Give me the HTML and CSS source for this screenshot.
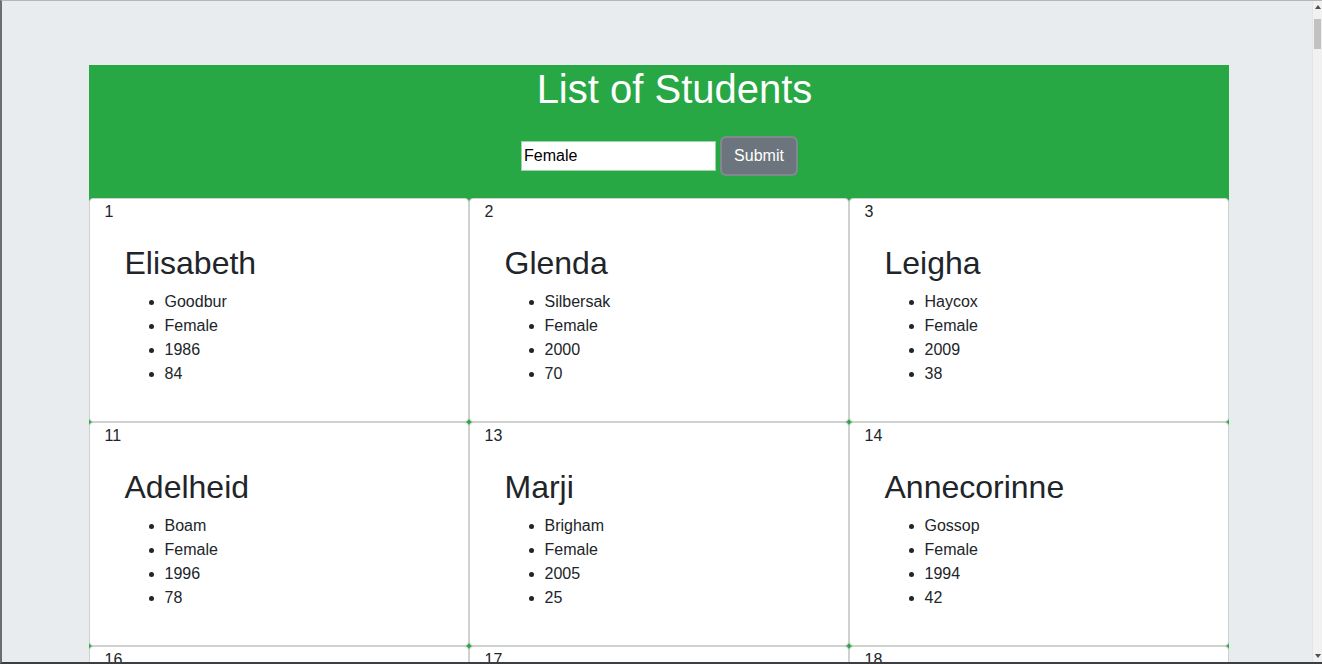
FILE: index.html
```html
<!DOCTYPE html>
<html lang="en">
<head>
<meta charset="utf-8">
<title>List of Students</title>
<link rel="stylesheet" href="styles.css">
</head>
<body>
<div class="window">
  <div class="viewport">
    <div class="container">
      <header class="header">
        <h1 class="title">List of Students</h1>
        <form class="filter">
          <input class="filter-input" type="text" value="Female">
          <button class="btn" type="button">Submit</button>
        </form>
      </header>
      <div class="grid">
        <div class="card"><div class="num">1</div><div class="body"><h2 class="name">Elisabeth</h2><ul class="facts"><li>Goodbur</li><li>Female</li><li>1986</li><li>84</li></ul></div></div>
        <div class="card"><div class="num">2</div><div class="body"><h2 class="name">Glenda</h2><ul class="facts"><li>Silbersak</li><li>Female</li><li>2000</li><li>70</li></ul></div></div>
        <div class="card"><div class="num">3</div><div class="body"><h2 class="name">Leigha</h2><ul class="facts"><li>Haycox</li><li>Female</li><li>2009</li><li>38</li></ul></div></div>
        <div class="card"><div class="num">11</div><div class="body"><h2 class="name">Adelheid</h2><ul class="facts"><li>Boam</li><li>Female</li><li>1996</li><li>78</li></ul></div></div>
        <div class="card"><div class="num">13</div><div class="body"><h2 class="name">Marji</h2><ul class="facts"><li>Brigham</li><li>Female</li><li>2005</li><li>25</li></ul></div></div>
        <div class="card"><div class="num">14</div><div class="body"><h2 class="name">Annecorinne</h2><ul class="facts"><li>Gossop</li><li>Female</li><li>1994</li><li>42</li></ul></div></div>
        <div class="card"><div class="num">16</div><div class="body"><h2 class="name">Kassey</h2><ul class="facts"><li>Mowle</li><li>Female</li><li>1999</li><li>61</li></ul></div></div>
        <div class="card"><div class="num">17</div><div class="body"><h2 class="name">Orelia</h2><ul class="facts"><li>Dunkerk</li><li>Female</li><li>2003</li><li>57</li></ul></div></div>
        <div class="card"><div class="num">18</div><div class="body"><h2 class="name">Tildie</h2><ul class="facts"><li>Ferrelli</li><li>Female</li><li>1991</li><li>33</li></ul></div></div>
      </div>
    </div>
  </div>
  <div class="scrollbar">
    <div class="arrow arrow-up"></div>
    <div class="thumb"></div>
    <div class="track-fill"></div>
    <div class="arrow arrow-down"></div>
  </div>
</div>
</body>
</html>
```
FILE: styles.css
```css
html, body {
  margin: 0;
  padding: 0;
  height: 100%;
  overflow: hidden;
}
body {
  background: #e9ecef;
  font-family: "Liberation Sans", Arial, sans-serif;
  color: #212529;
  font-size: 16px;
  line-height: 24px;
}
.window {
  display: flex;
  height: 664px;
  box-sizing: border-box;
  border-top: 1px solid #b4b6b8;
  border-left: 2px solid #6b6d70;
  border-bottom: 2px solid #3c3e40;
}
.viewport {
  flex: 1;
  overflow: hidden;
  padding-left: 3px;
}
.container {
  width: 1140px;
  margin: 64px auto 0;
  background: #28a745;
}
.header {
  text-align: center;
}
.title {
  margin: 0;
  padding-left: 32px;
  font-size: 40px;
  line-height: 48px;
  font-weight: 400;
  color: #ffffff;
}
.filter {
  display: flex;
  justify-content: center;
  align-items: center;
  padding: 25px 0 24px;
  margin: 0;
}
.filter-input {
  width: 195px;
  height: 30px;
  box-sizing: border-box;
  border: 1px solid #9fd3aa;
  padding: 0 2px;
  font-family: "Liberation Sans", Arial, sans-serif;
  font-size: 16px;
  color: #000;
  background: #fff;
  outline: none;
}
.btn {
  margin-left: 6px;
  width: 74px;
  height: 36px;
  border: 1px solid #6c757d;
  border-radius: 4px;
  background: #6c757d;
  color: #fff;
  font-family: "Liberation Sans", Arial, sans-serif;
  font-size: 16px;
  padding: 0;
  box-shadow: 0 0 0 2px #7f8a8c;
}
.grid {
  display: grid;
  grid-template-columns: repeat(3, 1fr);
}
.card {
  background: #fff;
  border: 1px solid #cfd2d0;
  border-radius: 4px;
  height: 224px;
  box-sizing: border-box;
  overflow: hidden;
}
.num {
  padding: 1px 15px 0;
  line-height: 24px;
}
.body {
  padding: 20px 20px 19px 35px;
}
.name {
  margin: 0 0 8px;
  font-size: 32px;
  line-height: 38px;
  font-weight: 400;
}
.facts {
  margin: 0 0 16px;
  padding-left: 40px;
}
.facts li {
  line-height: 24px;
}
.scrollbar {
  width: 9px;
  background: #f1f1f1;
  display: flex;
  flex-direction: column;
  align-items: center;
  border-left: 1px solid #e4e4e4;
}
.arrow {
  width: 0;
  height: 0;
  border-left: 3px solid transparent;
  border-right: 3px solid transparent;
  margin: 4px 0;
}
.arrow-up {
  border-bottom: 4px solid #505050;
}
.arrow-down {
  border-top: 4px solid #505050;
}
.thumb {
  width: 7px;
  height: 30px;
  margin-top: 6px;
  background: #c1c1c1;
}
.track-fill {
  flex: 1;
}
```
